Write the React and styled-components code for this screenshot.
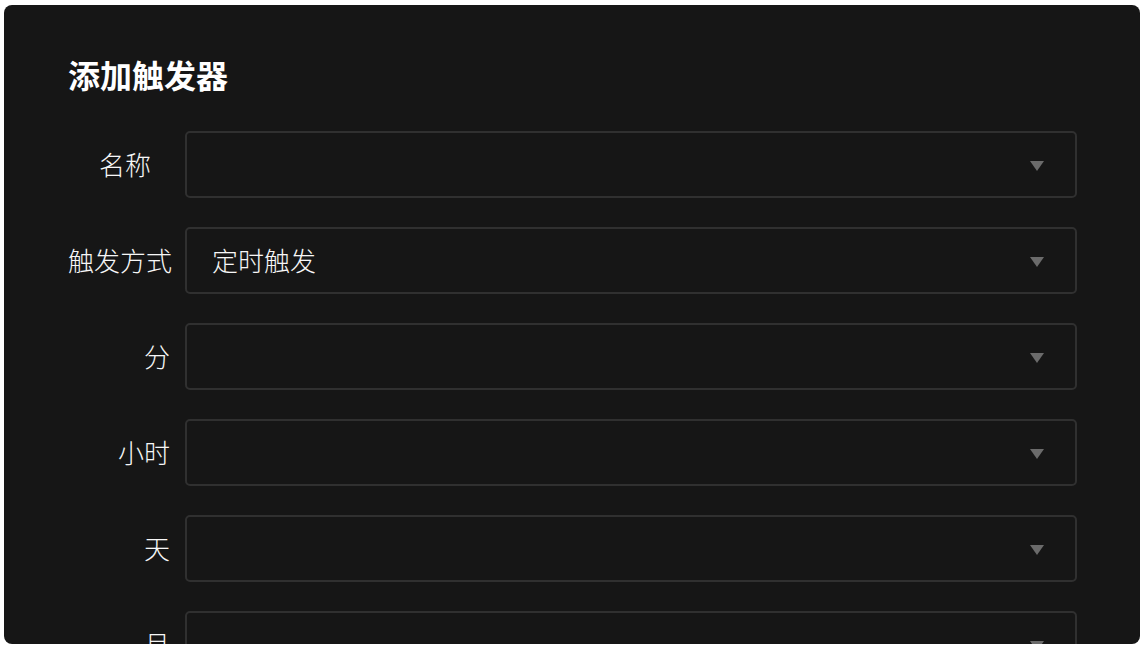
import React from "react";
import styled, {createGlobalStyle} from "styled-components";

const GlobalStyle = createGlobalStyle`
  html, body {
    margin: 0;
    padding: 0;
    background: #ffffff;
  }
  body {
    font-family: "Noto Sans CJK SC", "Noto Sans", sans-serif;
  }
`;

const fields = [
  {label: "名称", value: "", inset: 19},
  {label: "触发方式", value: "定时触发"},
  {label: "分", value: ""},
  {label: "小时", value: ""},
  {label: "天", value: ""},
  {label: "月", value: ""},
];

const Caret = () => (
  <svg width="14" height="10" viewBox="0 0 14 10">
    <polygon points="0,0 14,0 7,10" fill="#6b6b6b" />
  </svg>
);

const App = () => {
  return (
    <Page>
      <GlobalStyle />
      <Panel>
        <Title>添加触发器</Title>
        <Form>
          {fields.map(field => (
            <Row key={field.label}>
              <Label $inset={field.inset || 0}>{field.label}</Label>
              <Select>
                <SelectValue>{field.value}</SelectValue>
                <CaretBox>
                  <Caret />
                </CaretBox>
              </Select>
            </Row>
          ))}
        </Form>
      </Panel>
    </Page>
  );
}

const Page = styled.div`
  box-sizing: border-box;
  height: 649px;
  padding: 5px 4px 5px 4px;
`;

const Panel = styled.div`
  box-sizing: border-box;
  height: 100%;
  background-color: #161616;
  border-radius: 8px;
  overflow: hidden;
  padding: 46px 63px 0 64px;
`;

const Title = styled.div`
  font-size: 32px;
  font-weight: 700;
  line-height: 46px;
  color: #ffffff;
`;

const Form = styled.div`
  margin-top: 34px;
  display: flex;
  flex-direction: column;
  gap: 29px;
`;

const Row = styled.div`
  display: flex;
  align-items: center;
  gap: 15px;
`;

const Label = styled.div`
  box-sizing: border-box;
  width: 102px;
  flex-shrink: 0;
  padding-right: ${p => p.$inset}px;
  margin-bottom: 3px;
  text-align: right;
  white-space: nowrap;
  font-size: 26px;
  font-weight: 300;
  color: #f7f7f7;
`;

const Select = styled.div`
  box-sizing: border-box;
  flex: 1;
  height: 67px;
  border: 2px solid #303030;
  border-radius: 5px;
  display: flex;
  align-items: center;
  padding: 0 31px 0 25px;
`;

const SelectValue = styled.div`
  flex: 1;
  margin-bottom: 3px;
  font-size: 26px;
  font-weight: 300;
  color: #f7f7f7;
`;

const CaretBox = styled.div`
  display: flex;
  align-items: center;
  margin-top: 2px;
`;

export default App;
